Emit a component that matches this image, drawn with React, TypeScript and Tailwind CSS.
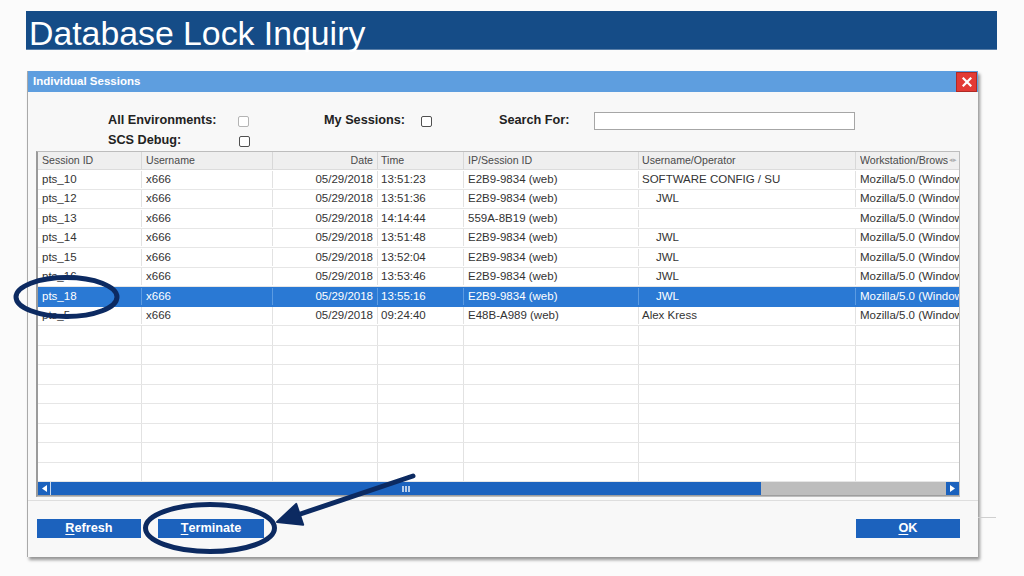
import React from "react";

type Row = {
  id: string;
  user: string;
  date: string;
  time: string;
  ip: string;
  op: string;
  indent: boolean;
  ws: string;
  selected?: boolean;
};

const rows: Row[] = [
  { id: "pts_10", user: "x666", date: "05/29/2018", time: "13:51:23", ip: "E2B9-9834 (web)", op: "SOFTWARE CONFIG / SU", indent: false, ws: "Mozilla/5.0 (Windows NT 10.0)" },
  { id: "pts_12", user: "x666", date: "05/29/2018", time: "13:51:36", ip: "E2B9-9834 (web)", op: "JWL", indent: true, ws: "Mozilla/5.0 (Windows NT 10.0)" },
  { id: "pts_13", user: "x666", date: "05/29/2018", time: "14:14:44", ip: "559A-8B19 (web)", op: "", indent: false, ws: "Mozilla/5.0 (Windows NT 10.0)" },
  { id: "pts_14", user: "x666", date: "05/29/2018", time: "13:51:48", ip: "E2B9-9834 (web)", op: "JWL", indent: true, ws: "Mozilla/5.0 (Windows NT 10.0)" },
  { id: "pts_15", user: "x666", date: "05/29/2018", time: "13:52:04", ip: "E2B9-9834 (web)", op: "JWL", indent: true, ws: "Mozilla/5.0 (Windows NT 10.0)" },
  { id: "pts_16", user: "x666", date: "05/29/2018", time: "13:53:46", ip: "E2B9-9834 (web)", op: "JWL", indent: true, ws: "Mozilla/5.0 (Windows NT 10.0)" },
  { id: "pts_18", user: "x666", date: "05/29/2018", time: "13:55:16", ip: "E2B9-9834 (web)", op: "JWL", indent: true, ws: "Mozilla/5.0 (Windows NT 10.0)", selected: true },
  { id: "pts_5", user: "x666", date: "05/29/2018", time: "09:24:40", ip: "E48B-A989 (web)", op: "Alex Kress", indent: false, ws: "Mozilla/5.0 (Windows NT 10.0)" },
];

function Checkbox({ light }: { light?: boolean }) {
  return (
    <span
      className={
        light
          ? "block w-[11px] h-[11px] rounded-[2px] border border-[#b4b4b4] bg-white shrink-0"
          : "block w-[11px] h-[11px] rounded-[2px] border-[1.5px] border-[#505050] bg-white shrink-0"
      }
    />
  );
}

function Cells({ r, empty }: { r?: Row; empty?: boolean }) {
  const sel = r?.selected;
  const b = sel ? "border-[#5b9be2]" : "border-[#e2e2e2]";
  const base = `shrink-0 border-r ${b} overflow-hidden whitespace-nowrap`;
  return (
    <>
      <div className={`${base} w-[104px] pl-[4px]`}>{empty ? "" : r?.id}</div>
      <div className={`${base} w-[131px] pl-[4px]`}>{empty ? "" : r?.user}</div>
      <div className={`${base} w-[105px] pr-[4px] text-right`}>{empty ? "" : r?.date}</div>
      <div className={`${base} w-[86px] pl-[3px]`}>{empty ? "" : r?.time}</div>
      <div className={`${base} w-[175px] pl-[4px]`}>{empty ? "" : r?.ip}</div>
      <div className={`${base} w-[217px] ${r?.indent ? "pl-[17px]" : "pl-[3px]"}`}>{empty ? "" : r?.op}</div>
      <div className="flex-1 min-w-0 overflow-hidden whitespace-nowrap pl-[4px]">{empty ? "" : r?.ws}</div>
    </>
  );
}

function Btn({ first, rest, w }: { first: string; rest: string; w: string }) {
  return (
    <div className={`${w} h-[19px] bg-[#1c62bd] flex items-center justify-center text-white text-[12.7px] font-bold`}>
      <span className="underline underline-offset-2">{first}</span>
      <span>{rest}</span>
    </div>
  );
}

export default function App() {
  return (
    <div
      className="relative w-[1024px] h-[576px] bg-[#fbfbfb] overflow-hidden"
      style={{ fontFamily: '"Liberation Sans", Arial, sans-serif' }}
    >
      {/* Header bar */}
      <div className="pt-[11px] pl-[26px]">
        <div className="w-[971px] h-[39px] bg-[#154c87] border-b border-[#5a7fa8] flex items-start">
          <div className="pl-[3px] pt-[2px] text-white text-[33.8px] leading-[40px]">Database Lock Inquiry</div>
        </div>
      </div>

      {/* Dialog row */}
      <div className="flex items-start pl-[27px] mt-[21px]">
        <div className="w-[951px] h-[486px] bg-[#f8f8f8] border-l border-[#a9a9a9] shadow-[2px_3px_3px_rgba(0,0,0,0.4)] flex flex-col">
          {/* title */}
          <div className="h-[21px] bg-[#5e9edf] flex items-center justify-between shrink-0">
            <div className="pl-[5px] text-white text-[11.5px] font-bold">Individual Sessions</div>
            <div className="w-[21px] h-[20px] mr-[1px] mt-[1px] bg-[#e33a35] border border-[#b02a25] flex items-center justify-center">
              <svg width="10" height="10" viewBox="0 0 10 10">
                <path d="M1.5 1.5 L8.5 8.5 M8.5 1.5 L1.5 8.5" stroke="white" strokeWidth="2.2" strokeLinecap="square" />
              </svg>
            </div>
          </div>

          {/* filters */}
          <div className="h-[59px] shrink-0 pt-[20px] pl-[80px] text-[12.7px] font-bold text-[#222]">
            <div className="h-[18px] flex items-center">
              <span className="w-[130px] shrink-0">All Environments:</span>
              <Checkbox light />
              <span className="w-[75px] shrink-0" />
              <span className="w-[97px] shrink-0">My Sessions:</span>
              <Checkbox />
              <span className="w-[67px] shrink-0" />
              <span className="w-[95px] shrink-0">Search For:</span>
              <span className="block w-[261px] h-[18px] bg-white border border-[#a6a6a6] shrink-0" />
            </div>
            <div className="h-[18px] mt-[2px] flex items-center">
              <span className="w-[131px] shrink-0">SCS Debug:</span>
              <Checkbox />
            </div>
          </div>

          {/* table */}
          <div className="ml-[8px] w-[924px] h-[346px] shrink-0 bg-white border border-[#bdbdbd] border-l-2 border-l-[#9a9a9a] flex flex-col">
            <div className="h-[18px] shrink-0 bg-[#efefef] border-b border-[#dcdcdc] flex items-center text-[10.6px] text-[#4a4a4a]">
              <div className="shrink-0 w-[104px] pl-[4px] border-r border-[#d8d8d8] h-full flex items-center">Session ID</div>
              <div className="shrink-0 w-[131px] pl-[4px] border-r border-[#d8d8d8] h-full flex items-center">Username</div>
              <div className="shrink-0 w-[105px] pr-[4px] border-r border-[#d8d8d8] h-full flex items-center justify-end">Date</div>
              <div className="shrink-0 w-[86px] pl-[3px] border-r border-[#d8d8d8] h-full flex items-center">Time</div>
              <div className="shrink-0 w-[175px] pl-[4px] border-r border-[#d8d8d8] h-full flex items-center">IP/Session ID</div>
              <div className="shrink-0 w-[217px] pl-[3px] border-r border-[#d8d8d8] h-full flex items-center">Username/Operator</div>
              <div className="flex-1 min-w-0 pl-[4px] h-full flex items-center overflow-hidden whitespace-nowrap">
                <span className="flex-1 min-w-0 overflow-hidden">Workstation/Browser</span>
                <span className="text-[7px] text-[#b0b0b0] pl-[1px] pr-[2px] shrink-0">◂▸</span>
              </div>
            </div>
            <div className="flex-1 flex flex-col text-[11.5px] text-[#333]">
              {rows.map((r) => (
                <div
                  key={r.id}
                  className={
                    r.selected
                      ? "h-[19.5px] shrink-0 flex items-center bg-[#2a79d4] text-white border-b border-[#2a79d4]"
                      : "h-[19.5px] shrink-0 flex items-center border-b border-[#e6e6e6]"
                  }
                >
                  <Cells r={r} />
                </div>
              ))}
              {Array.from({ length: 8 }).map((_, i) => (
                <div key={i} className="h-[19.5px] shrink-0 flex items-stretch border-b border-[#e6e6e6]">
                  <Cells empty />
                </div>
              ))}
            </div>
            {/* scrollbar */}
            <div className="h-[14px] shrink-0 flex bg-[#bdbdbd] border-b border-[#9e9e9e]">
              <div className="w-[13px] h-full bg-[#1b62be] border-r border-[#c8d8ee] flex items-center justify-center">
                <svg width="5" height="7" viewBox="0 0 5 7"><path d="M5 0 L0 3.5 L5 7 Z" fill="white" /></svg>
              </div>
              <div className="w-[710px] h-full bg-[#1c63bf] flex items-center justify-center">
                <div className="flex gap-[1px]">
                  <span className="block w-[2px] h-[6px] bg-[#b8cdea]" />
                  <span className="block w-[2px] h-[6px] bg-[#b8cdea]" />
                  <span className="block w-[2px] h-[6px] bg-[#b8cdea]" />
                </div>
              </div>
              <div className="flex-1" />
              <div className="w-[13px] h-full bg-[#1b62be] flex items-center justify-center">
                <svg width="5" height="7" viewBox="0 0 5 7"><path d="M0 0 L5 3.5 L0 7 Z" fill="white" /></svg>
              </div>
            </div>
          </div>

          {/* footer */}
          <div className="mt-[3px] border-t border-[#dedede] pt-[18px] pl-[9px] pr-[18px] flex items-start">
            <Btn first="R" rest="efresh" w="w-[104px]" />
            <div className="w-[17px]" />
            <Btn first="T" rest="erminate" w="w-[106px]" />
            <div className="flex-1" />
            <Btn first="O" rest="K" w="w-[104px]" />
          </div>
        </div>
        <div className="w-[18px] mt-[446px] border-t border-[#cfcfcf]" />
      </div>

      {/* annotations */}
      <svg className="absolute inset-0 pointer-events-none" width="1024" height="576" viewBox="0 0 1024 576">
        <ellipse cx="66.5" cy="297" rx="50.5" ry="19.5" fill="none" stroke="#0c2a61" strokeWidth="5" />
        <ellipse cx="210" cy="528" rx="64.5" ry="23.5" fill="none" stroke="#0c2a61" strokeWidth="5" />
        <line x1="413" y1="476" x2="296" y2="515.5" stroke="#0c2a61" strokeWidth="5" strokeLinecap="round" />
        <polygon points="277,522 296.2,503.9 303.2,524.7" fill="#0c2a61" stroke="#0c2a61" strokeWidth="2" strokeLinejoin="round" />
      </svg>
    </div>
  );
}
